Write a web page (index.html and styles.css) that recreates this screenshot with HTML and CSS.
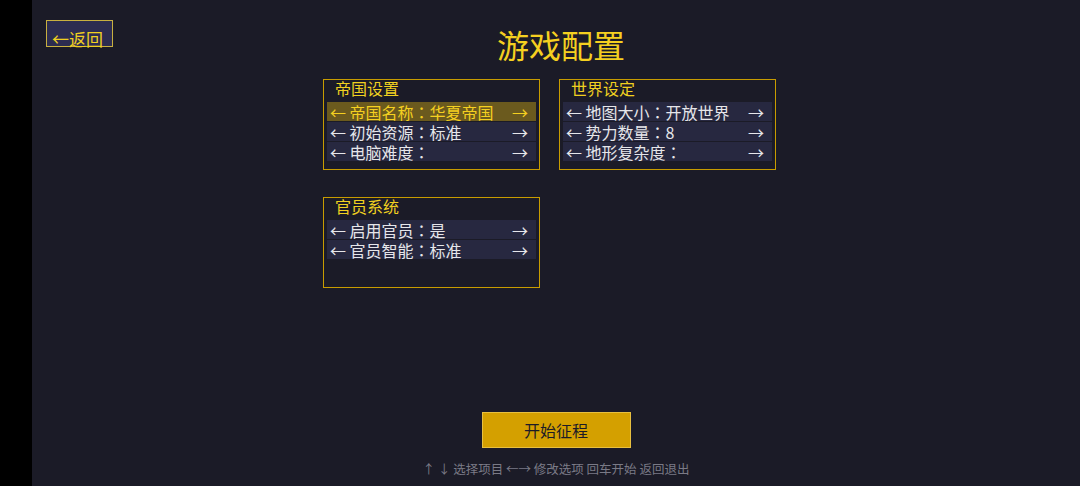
FILE: index.html
```html
<!DOCTYPE html>
<html lang="zh-CN">
<head>
<meta charset="utf-8">
<title>游戏配置</title>
<link rel="stylesheet" href="styles.css">
</head>
<body>
<div class="strip"></div>
<div class="main">
  <div class="header">
    <div class="back">←返回</div>
    <h1 class="title">游戏配置</h1>
    <div></div>
  </div>
  <div class="panels">
    <div class="panel">
      <div class="panel-title">帝国设置</div>
      <div class="row active"><span>← 帝国名称<span class="colon" lang="ja">：</span>华夏帝国</span><span>→</span></div>
      <div class="row"><span>← 初始资源<span class="colon" lang="ja">：</span>标准</span><span>→</span></div>
      <div class="row"><span>← 电脑难度<span class="colon" lang="ja">：</span></span><span>→</span></div>
    </div>
    <div class="panel">
      <div class="panel-title">世界设定</div>
      <div class="row"><span>← 地图大小<span class="colon" lang="ja">：</span>开放世界</span><span>→</span></div>
      <div class="row"><span>← 势力数量<span class="colon" lang="ja">：</span>8</span><span>→</span></div>
      <div class="row"><span>← 地形复杂度<span class="colon" lang="ja">：</span></span><span>→</span></div>
    </div>
    <div class="panel">
      <div class="panel-title">官员系统</div>
      <div class="row"><span>← 启用官员<span class="colon" lang="ja">：</span>是</span><span>→</span></div>
      <div class="row"><span>← 官员智能<span class="colon" lang="ja">：</span>标准</span><span>→</span></div>
    </div>
  </div>
  <div class="start">开始征程</div>
  <div class="hint">↑ ↓ 选择项目 ←→ 修改选项 回车开始 返回退出</div>
</div>
</body>
</html>
```
FILE: styles.css
```css
html, body {
  margin: 0;
  height: 486px;
  overflow: hidden;
}
body {
  display: flex;
  background: #1b1b27;
  font-family: "Noto Sans CJK SC", "Noto Sans", sans-serif;
}
.strip {
  width: 32px;
  flex: none;
  background: #000;
}
.main {
  flex: 1;
  display: flex;
  flex-direction: column;
}
.header {
  display: grid;
  grid-template-columns: 1fr auto 1fr;
  padding-top: 20px;
  align-items: start;
}
.back {
  justify-self: start;
  margin-left: 14px;
  width: 67px;
  height: 27px;
  box-sizing: border-box;
  border: 1px solid #c8b040;
  background: #2c2c50;
  color: #f0d020;
  font-size: 17px;
  line-height: 20px;
  padding: 8px 0 0 5px;
  white-space: nowrap;
}
.title {
  margin: 4px 0 0 0;
  padding-left: 10px;
  font-size: 32px;
  font-weight: 400;
  line-height: 40px;
  color: #f5d020;
}
.panels {
  width: 466px;
  margin: 15px auto 0;
  display: grid;
  grid-template-columns: 217px 217px;
  column-gap: 19px;
  row-gap: 27px;
}
.panel {
  height: 91px;
  box-sizing: border-box;
  border: 1px solid #c89c00;
  padding: 0 3px;
}
.panel-title {
  padding-left: 8px;
  font-size: 16px;
  line-height: 16px;
  height: 18px;
  margin-bottom: 4px;
  color: #f0d020;
}
.row {
  display: flex;
  justify-content: space-between;
  height: 19px;
  box-sizing: border-box;
  margin-bottom: 1px;
  padding: 2px 8px 0 3px;
  line-height: 17px;
  font-size: 16px;
  color: #e6e6ea;
  background: #272840;
  white-space: nowrap;
}
.row.active {
  background: #6b5a1e;
  color: #f5d020;
}
.colon {
  font-family: "Noto Sans CJK JP", "Noto Sans CJK SC", sans-serif;
}
.start {
  align-self: center;
  margin-top: 124px;
  width: 149px;
  height: 36px;
  box-sizing: border-box;
  border: 1px solid #e8c040;
  background: #d4a000;
  color: #1b1b27;
  font-size: 16px;
  line-height: 34px;
  text-align: center;
}
.hint {
  margin-top: 13px;
  text-align: center;
  font-size: 12.5px;
  line-height: 16px;
  color: #7a7a86;
}
```
